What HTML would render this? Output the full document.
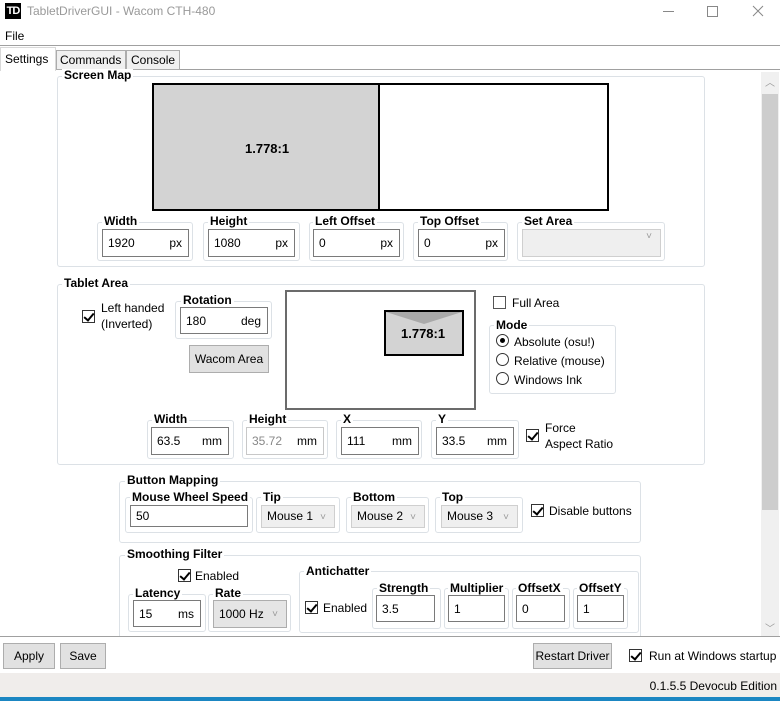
<!DOCTYPE html>
<html><head><meta charset="utf-8"><style>
*{box-sizing:border-box;margin:0;padding:0}
body{width:780px;height:701px;overflow:hidden;background:#fff;font-family:"Liberation Sans",sans-serif;font-size:12px;color:#000;position:relative}
.a{position:absolute}
.g{position:absolute;border:1px solid #dce1e6;border-radius:3px}
.lg{position:absolute;background:#fff;padding:0 2px;font-weight:bold;font-size:12px;line-height:13px;white-space:nowrap}
.in{position:absolute;border:1px solid #7a7a7a;background:#fff;font-size:12px;line-height:26px;padding-left:5px}
.in .u{position:absolute;right:6px;top:0}
.sel{position:absolute;border:1px solid #cfcfcf;background:#efefef;font-size:12px;padding-left:5px}
.sel:after{content:"˅";position:absolute;right:8px;top:1px;color:#999;font-size:10px}
.cb{position:absolute;width:13px;height:13px;border:1px solid #333;background:#fff}
.cb.c:after{content:"";position:absolute;left:3px;top:0px;width:4px;height:8px;border-right:2px solid #000;border-bottom:2px solid #000;transform:rotate(40deg)}
.rb{position:absolute;width:13px;height:13px;border:1px solid #333;border-radius:50%;background:#fff}
.rb.c:after{content:"";position:absolute;left:3px;top:3px;width:5px;height:5px;border-radius:50%;background:#000}
.btn{position:absolute;background:#e1e1e1;border:1px solid #adadad;text-align:center;font-size:12px}
.t{position:absolute;white-space:nowrap;font-size:12px}
</style></head><body>
<!-- title -->
<div class="a" style="left:5px;top:3px;width:16px;height:16px;background:#000;color:#fff;font-size:11px;font-weight:bold;line-height:16px;text-align:center;letter-spacing:-1px">TD</div>
<div class="t" style="left:27px;top:4px;color:#999;font-size:12px">TabletDriverGUI - Wacom CTH-480</div>
<svg class="a" style="left:650px;top:0" width="130" height="24"><line x1="13" y1="11.5" x2="24" y2="11.5" stroke="#888" stroke-width="1"/><rect x="57.5" y="6.5" width="10" height="10" fill="none" stroke="#888"/><path d="M103 6 L113 16 M113 6 L103 16" stroke="#888" stroke-width="1"/></svg>
<div class="t" style="left:5px;top:29px">File</div>
<div class="a" style="left:0;top:45px;width:780px;height:1px;background:#a0a0a0"></div>
<!-- tabs -->
<div class="a" style="left:0;top:69px;width:780px;height:1px;background:#a0a0a0"></div>
<div class="a" style="left:0;top:47px;width:56px;height:24px;background:#fff;border:1px solid #d9d9d9;border-bottom:none"></div>
<div class="t" style="left:5px;top:52px">Settings</div>
<div class="a" style="left:56px;top:50px;width:70px;height:20px;background:#f0f0f0;border:1px solid #acacac"></div>
<div class="t" style="left:60px;top:53px">Commands</div>
<div class="a" style="left:126px;top:50px;width:54px;height:20px;background:#f0f0f0;border:1px solid #acacac"></div>
<div class="t" style="left:131px;top:53px">Console</div>
<div class="a" style="left:56px;top:70px;width:1px;height:566px;background:#fff"></div>
<!-- scrollbar -->
<div class="a" style="left:761px;top:72px;width:18px;height:564px;background:#f0f0f0"></div>
<div class="a" style="left:762px;top:94px;width:16px;height:416px;background:#cdcdcd"></div>
<div class="t" style="left:765px;top:74px;color:#999;font-size:10px">︿</div>
<div class="t" style="left:765px;top:620px;color:#999;font-size:10px">﹀</div>

<!-- Screen Map -->
<div class="g" style="left:57px;top:76px;width:648px;height:191px"></div>
<div class="lg" style="left:62px;top:69px">Screen Map</div>
<div class="a" style="left:152px;top:83px;width:457px;height:128px;border:2px solid #000;background:#fff"></div>
<div class="a" style="left:154px;top:85px;width:226px;height:124px;background:#d3d3d3;border-right:2px solid #000"></div>
<div class="t" style="left:245px;top:141px;font-weight:bold;font-size:13px">1.778:1</div>
<div class="g" style="left:97px;top:222px;width:96px;height:39px"></div><div class="lg" style="left:102px;top:215px">Width</div>
<div class="in" style="left:102px;top:229px;width:87px;height:28px">1920<span class="u">px</span></div>
<div class="g" style="left:203px;top:222px;width:97px;height:39px"></div><div class="lg" style="left:208px;top:215px">Height</div>
<div class="in" style="left:208px;top:229px;width:87px;height:28px">1080<span class="u">px</span></div>
<div class="g" style="left:309px;top:222px;width:95px;height:39px"></div><div class="lg" style="left:313px;top:215px">Left Offset</div>
<div class="in" style="left:313px;top:229px;width:87px;height:28px">0<span class="u">px</span></div>
<div class="g" style="left:413px;top:222px;width:95px;height:39px"></div><div class="lg" style="left:418px;top:215px">Top Offset</div>
<div class="in" style="left:418px;top:229px;width:87px;height:28px">0<span class="u">px</span></div>
<div class="g" style="left:517px;top:222px;width:148px;height:39px"></div><div class="lg" style="left:522px;top:215px">Set Area</div>
<div class="sel" style="left:522px;top:229px;width:139px;height:28px"></div>

<!-- Tablet Area -->
<div class="g" style="left:57px;top:284px;width:648px;height:181px"></div>
<div class="lg" style="left:62px;top:277px">Tablet Area</div>
<div class="cb c" style="left:82px;top:310px"></div>
<div class="t" style="left:101px;top:301px">Left handed</div>
<div class="t" style="left:101px;top:317px">(Inverted)</div>
<div class="g" style="left:175px;top:301px;width:97px;height:38px"></div><div class="lg" style="left:181px;top:294px">Rotation</div>
<div class="in" style="left:180px;top:307px;width:88px;height:27px">180<span class="u">deg</span></div>
<div class="btn" style="left:189px;top:345px;width:80px;height:28px;line-height:26px">Wacom Area</div>
<div class="a" style="left:285px;top:290px;width:191px;height:120px;border:2px solid #6b6b6b;background:#fff"></div>
<div class="a" style="left:384px;top:310px;width:80px;height:46px;border:2px solid #000;background:#d3d3d3;overflow:hidden">
<svg width="76" height="42" style="position:absolute;left:0;top:0"><polygon points="0,0 76,0 38,12" fill="#a9a9a9"/></svg></div>
<div class="t" style="left:401px;top:326px;font-weight:bold;font-size:13px">1.778:1</div>
<div class="cb" style="left:493px;top:296px;border-color:#555"></div>
<div class="t" style="left:512px;top:296px">Full Area</div>
<div class="g" style="left:489px;top:325px;width:127px;height:69px"></div><div class="lg" style="left:494px;top:319px">Mode</div>
<div class="rb c" style="left:496px;top:334px"></div><div class="t" style="left:514px;top:335px">Absolute (osu!)</div>
<div class="rb" style="left:496px;top:353px"></div><div class="t" style="left:514px;top:354px">Relative (mouse)</div>
<div class="rb" style="left:496px;top:372px"></div><div class="t" style="left:514px;top:373px">Windows Ink</div>
<div class="g" style="left:147px;top:420px;width:87px;height:39px"></div><div class="lg" style="left:152px;top:413px">Width</div>
<div class="in" style="left:151px;top:427px;width:78px;height:28px">63.5<span class="u">mm</span></div>
<div class="g" style="left:242px;top:420px;width:86px;height:39px"></div><div class="lg" style="left:247px;top:413px">Height</div>
<div class="in" style="left:246px;top:427px;width:78px;height:28px;color:#888;border-color:#c8c8c8">35.72<span class="u" style="color:#000">mm</span></div>
<div class="g" style="left:336px;top:420px;width:86px;height:39px"></div><div class="lg" style="left:341px;top:413px">X</div>
<div class="in" style="left:341px;top:427px;width:78px;height:28px">111<span class="u">mm</span></div>
<div class="g" style="left:431px;top:420px;width:88px;height:39px"></div><div class="lg" style="left:436px;top:413px">Y</div>
<div class="in" style="left:436px;top:427px;width:78px;height:28px">33.5<span class="u">mm</span></div>
<div class="cb c" style="left:526px;top:429px"></div>
<div class="t" style="left:545px;top:421px">Force</div>
<div class="t" style="left:545px;top:437px">Aspect Ratio</div>

<!-- Button Mapping -->
<div class="g" style="left:119px;top:481px;width:522px;height:62px"></div>
<div class="lg" style="left:125px;top:474px">Button Mapping</div>
<div class="g" style="left:125px;top:497px;width:128px;height:36px"></div><div class="lg" style="left:130px;top:491px">Mouse Wheel Speed</div>
<div class="in" style="left:130px;top:505px;width:118px;height:22px;line-height:20px">50</div>
<div class="g" style="left:256px;top:497px;width:84px;height:36px"></div><div class="lg" style="left:261px;top:491px">Tip</div>
<div class="sel" style="left:261px;top:505px;width:74px;height:23px;line-height:21px">Mouse 1</div>
<div class="g" style="left:346px;top:497px;width:83px;height:36px"></div><div class="lg" style="left:351px;top:491px">Bottom</div>
<div class="sel" style="left:351px;top:505px;width:74px;height:23px;line-height:21px">Mouse 2</div>
<div class="g" style="left:435px;top:497px;width:88px;height:36px"></div><div class="lg" style="left:440px;top:491px">Top</div>
<div class="sel" style="left:441px;top:505px;width:77px;height:23px;line-height:21px">Mouse 3</div>
<div class="cb c" style="left:531px;top:504px"></div>
<div class="t" style="left:549px;top:504px">Disable buttons</div>

<!-- Smoothing -->
<div class="g" style="left:119px;top:555px;width:522px;height:90px"></div>
<div class="lg" style="left:125px;top:548px">Smoothing Filter</div>
<div class="cb c" style="left:178px;top:569px"></div><div class="t" style="left:195px;top:569px">Enabled</div>
<div class="g" style="left:128px;top:594px;width:78px;height:38px"></div><div class="lg" style="left:133px;top:587px">Latency</div>
<div class="in" style="left:133px;top:600px;width:68px;height:27px">15<span class="u">ms</span></div>
<div class="g" style="left:208px;top:594px;width:83px;height:38px"></div><div class="lg" style="left:213px;top:587px">Rate</div>
<div class="sel" style="left:213px;top:600px;width:74px;height:28px;line-height:26px;border-color:#adadad;background:#e5e5e5">1000 Hz</div>
<div class="g" style="left:299px;top:571px;width:340px;height:62px"></div><div class="lg" style="left:304px;top:565px">Antichatter</div>
<div class="cb c" style="left:305px;top:601px"></div><div class="t" style="left:323px;top:601px">Enabled</div>
<div class="g" style="left:372px;top:588px;width:69px;height:41px"></div><div class="lg" style="left:377px;top:582px">Strength</div>
<div class="in" style="left:376px;top:595px;width:59px;height:27px">3.5</div>
<div class="g" style="left:444px;top:588px;width:65px;height:41px"></div><div class="lg" style="left:448px;top:582px">Multiplier</div>
<div class="in" style="left:448px;top:595px;width:57px;height:27px">1</div>
<div class="g" style="left:512px;top:588px;width:58px;height:41px"></div><div class="lg" style="left:516px;top:582px">OffsetX</div>
<div class="in" style="left:516px;top:595px;width:49px;height:27px">0</div>
<div class="g" style="left:573px;top:588px;width:55px;height:41px"></div><div class="lg" style="left:577px;top:582px">OffsetY</div>
<div class="in" style="left:577px;top:595px;width:47px;height:27px">1</div>

<!-- bottom -->
<div class="a" style="left:0;top:636px;width:780px;height:37px;background:#fff;border-top:1px solid #a0a0a0"></div>
<div class="btn" style="left:3px;top:643px;width:52px;height:26px;line-height:24px">Apply</div>
<div class="btn" style="left:60px;top:643px;width:46px;height:26px;line-height:24px">Save</div>
<div class="btn" style="left:533px;top:643px;width:79px;height:26px;line-height:24px">Restart Driver</div>
<div class="cb c" style="left:629px;top:649px"></div>
<div class="t" style="left:649px;top:649px">Run at Windows startup</div>
<div class="a" style="left:0;top:673px;width:780px;height:24px;background:#f0edeb"></div>
<div class="t" style="right:3px;top:679px">0.1.5.5 Devocub Edition</div>
<div class="a" style="left:0;top:697px;width:780px;height:4px;background:#1b86c2"></div>
</body></html>
